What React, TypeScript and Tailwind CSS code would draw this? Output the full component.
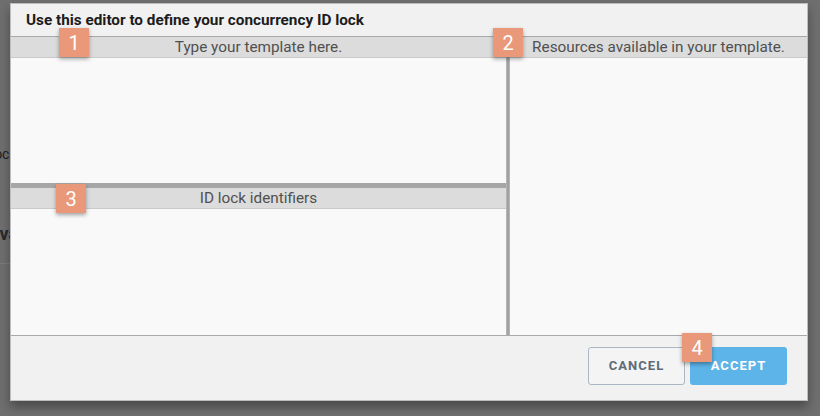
import React from "react";

function Badge({ n, className }: { n: string; className: string }) {
  return (
    <div
      className={`absolute w-[30px] h-[29px] bg-[#ea987a] text-white text-[20px] leading-none flex items-center justify-center shadow-[0_2px_4px_rgba(0,0,0,0.35)] ${className}`}
    >
      {n}
    </div>
  );
}

function PaneHeader({ children }: { children: React.ReactNode }) {
  return (
    <div className="h-[22px] shrink-0 bg-[#dcdcdc] border-t border-t-[#a8a8a8] border-b border-b-[#c9c9c9] flex items-center justify-center text-[15.3px] text-[#505050]">
      {children}
    </div>
  );
}

export default function App() {
  return (
    <div className="relative w-[820px] h-[416px] overflow-hidden bg-[#6f6f6f] font-['Roboto',sans-serif]">
      {/* page behind the overlay */}
      <div className="flex flex-col pt-[145px] ml-[-18px]">
        <div className="text-[14px] text-[#1e1e1e] leading-[18px]">Block</div>
        <div className="mt-[60px] ml-[-2px] text-[18px] font-bold text-[#2a2a2a] leading-[22px]">Java</div>
        <div className="mt-[18px] h-px w-[60px] bg-[#7c7c7c]" />
      </div>

      {/* dialog */}
      <div className="absolute left-[10px] top-[3px] w-[798px] h-[398px] border border-[#bdbdbd] bg-[#f1f1f1] flex flex-col shadow-[0_6px_10px_rgba(0,0,0,0.35)]">
        <div className="h-[32px] shrink-0 flex items-center pl-[15px] pt-[1px] text-[15.3px] font-bold text-[#1c1c1c]">
          Use this editor to define your concurrency ID lock
        </div>

        <div className="flex-1 flex min-h-0">
          <div className="w-[495px] flex flex-col">
            <PaneHeader>Type your template here.</PaneHeader>
            <div className="h-[125px] bg-[#f9f9f9]" />
            <div className="h-[4px] bg-[#a6a6a6]" />
            <PaneHeader>ID lock identifiers</PaneHeader>
            <div className="flex-1 bg-[#f9f9f9]" />
          </div>
          <div className="w-[4px] bg-[#a2a2a2] border-x border-x-[#b4b4b4]" />
          <div className="flex-1 flex flex-col">
            <PaneHeader>Resources available in your template.</PaneHeader>
            <div className="flex-1 bg-[#f9f9f9]" />
          </div>
        </div>

        <div className="h-[65px] shrink-0 border-t border-t-[#a9a9a9] flex justify-end items-start pt-[11px] pr-[20px] gap-[5px]">
          <button className="w-[97px] h-[38px] rounded-[3px] border border-[#a9b8c4] bg-[#f4f4f4] text-[13px] font-bold tracking-[0.08em] text-[#5e6b77]">
            CANCEL
          </button>
          <button className="w-[97px] h-[38px] rounded-[3px] bg-[#5cb4e9] text-[13px] font-bold tracking-[0.08em] text-white">
            ACCEPT
          </button>
        </div>

        <Badge n="1" className="left-[48px] top-[24px]" />
        <Badge n="2" className="left-[482px] top-[24px]" />
        <Badge n="3" className="left-[45px] top-[180px]" />
        <Badge n="4" className="left-[671px] top-[329px]" />
      </div>
    </div>
  );
}
